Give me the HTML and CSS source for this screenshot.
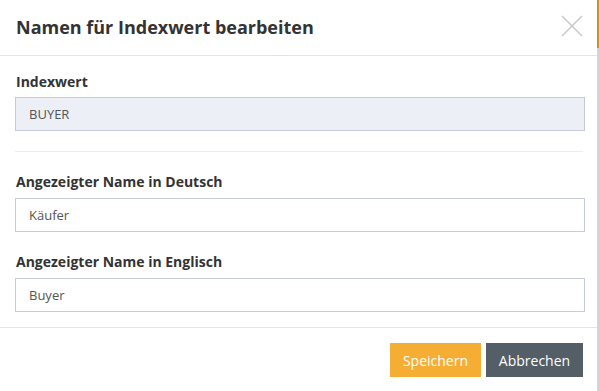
FILE: index.html
```html
<!DOCTYPE html>
<html lang="de">
<head>
    <meta charset="UTF-8">
    <meta name="viewport" content="width=device-width, initial-scale=1.0">
    <title>Namen für Indexwert bearbeiten</title>
    <link rel="stylesheet" href="styles.css">
</head>
<body>
    <div class="page">
        <div class="modal">
            <div class="modal-header">
                <h4>Namen für Indexwert bearbeiten</h4>
                <span class="close">
                    <svg width="22" height="22" viewBox="0 0 22 22">
                        <path d="M1 1 L21 21 M21 1 L1 21" stroke="#c6c6c6" stroke-width="1.4" fill="none"/>
                    </svg>
                </span>
            </div>
            <div class="modal-body">
                <div class="field">
                    <label>Indexwert</label>
                    <input type="text" class="input readonly" value="BUYER" readonly>
                </div>
                <hr>
                <div class="field">
                    <label>Angezeigter Name in Deutsch</label>
                    <input type="text" class="input" value="Käufer">
                </div>
                <div class="field">
                    <label>Angezeigter Name in Englisch</label>
                    <input type="text" class="input" value="Buyer">
                </div>
            </div>
            <div class="modal-footer">
                <button class="btn save">Speichern</button>
                <button class="btn cancel">Abbrechen</button>
            </div>
        </div>
        <div class="edge"></div>
    </div>
</body>
</html>
```

FILE: styles.css
```css
*,
*:after,
*:before
{
    margin: 0;
    padding: 0;
    box-sizing: border-box;
}
body
{
    width: 599px;
    height: 391px;
    background: #fff;
    font-family: "Open Sans", "Liberation Sans", sans-serif;
    color: #333;
    overflow: hidden;
}
.page
{
    display: flex;
    height: 100%;
}
.modal
{
    width: 597px;
    display: flex;
    flex-direction: column;
}
.edge
{
    width: 2px;
    height: 100%;
    background: linear-gradient(to bottom, #d98a1c 0, #d98a1c 48px, #d4d4d4 48px);
}
.modal-header
{
    height: 56px;
    border-bottom: 1px solid #e5e5e5;
    display: flex;
    align-items: center;
    justify-content: space-between;
    padding: 0 14px 2px 16px;
}
.modal-header h4
{
    font-size: 18px;
    font-weight: 700;
    color: #333;
}
.close
{
    display: flex;
    margin-top: -1px;
}
.modal-body
{
    padding: 16px 14px 0 15px;
    height: 272px;
    border-bottom: 1px solid #e5e5e5;
}
.field label
{
    display: block;
    font-size: 14px;
    font-weight: 700;
    color: #333;
    margin-bottom: 5px;
    line-height: 20px;
    padding-left: 1px;
}
.field + .field
{
    margin-top: 20px;
}
hr + .field label
{
    margin-bottom: 6px;
}
.field + .field label
{
    margin-bottom: 6px;
}
.input
{
    display: block;
    width: 570px;
    height: 34px;
    border: 1px solid #c5cbd8;
    background: #fff;
    padding: 0 13px;
    font-family: "Open Sans", "Liberation Sans", sans-serif;
    font-size: 13px;
    color: #555;
    outline: none;
}
.input.readonly
{
    background: #eceff5;
}
hr
{
    border: 0;
    border-top: 1px solid #eee;
    width: 568px;
    margin: 20px 0 20px;
}
.modal-footer
{
    display: flex;
    justify-content: flex-end;
    gap: 5px;
    padding: 15px 14px 0 0;
}
.btn
{
    height: 34px;
    border: 0;
    color: #fff;
    font-family: "Open Sans", "Liberation Sans", sans-serif;
    font-size: 14px;
    padding: 0 12px;
}
.save
{
    background: #f5ae33;
    width: 91px;
}
.cancel
{
    background: #545e66;
    width: 97px;
}
```
